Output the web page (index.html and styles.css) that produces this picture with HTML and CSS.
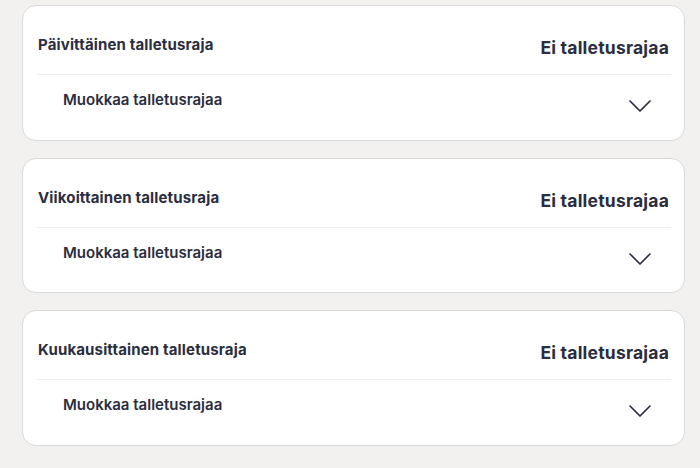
FILE: index.html
```html
<!DOCTYPE html>
<html lang="fi">
<head>
<meta charset="utf-8">
<link rel="stylesheet" href="styles.css">
</head>
<body>
<div class="list">
  <section class="card">
    <div class="head">
      <span class="title">Päivittäinen talletusraja</span>
      <span class="value">Ei talletusrajaa</span>
    </div>
    <div class="row">
      <span class="edit">Muokkaa talletusrajaa</span>
      <svg class="chev" width="22" height="12" viewBox="0 0 22 12"><path d="M1 1 L11 11 L21 1" fill="none" stroke="#2b2d40" stroke-width="1.7" stroke-linecap="round" stroke-linejoin="round"/></svg>
    </div>
  </section>
  <section class="card">
    <div class="head">
      <span class="title">Viikoittainen talletusraja</span>
      <span class="value">Ei talletusrajaa</span>
    </div>
    <div class="row">
      <span class="edit">Muokkaa talletusrajaa</span>
      <svg class="chev" width="22" height="12" viewBox="0 0 22 12"><path d="M1 1 L11 11 L21 1" fill="none" stroke="#2b2d40" stroke-width="1.7" stroke-linecap="round" stroke-linejoin="round"/></svg>
    </div>
  </section>
  <section class="card">
    <div class="head">
      <span class="title">Kuukausittainen talletusraja</span>
      <span class="value">Ei talletusrajaa</span>
    </div>
    <div class="row">
      <span class="edit">Muokkaa talletusrajaa</span>
      <svg class="chev" width="22" height="12" viewBox="0 0 22 12"><path d="M1 1 L11 11 L21 1" fill="none" stroke="#2b2d40" stroke-width="1.7" stroke-linecap="round" stroke-linejoin="round"/></svg>
    </div>
  </section>
</div>
</body>
</html>
```
FILE: styles.css
```css
html, body {
  margin: 0;
  padding: 0;
  background: #f2f1ef;
}
body {
  width: 700px;
  height: 468px;
  overflow: hidden;
  font-family: "Inter", "Noto Sans", sans-serif;
  color: #2b2d40;
}
.list {
  display: flex;
  flex-direction: column;
  gap: 17px;
  padding: 5px 15px 0 22px;
}
.card {
  box-sizing: border-box;
  height: 135.5px;
  background: #ffffff;
  border: 1px solid #d9d9dc;
  border-radius: 14px;
  padding: 0 13px 0 14px;
}
.head {
  display: flex;
  justify-content: space-between;
  align-items: flex-start;
  padding: 29px 2px 0 1px;
  height: 39px;
  border-bottom: 1px solid #efefef;
}
.title {
  font-size: 15px;
  line-height: 20px;
  font-weight: 700;
  letter-spacing: 0.15px;
}
.value {
  margin-top: 1px;
  font-size: 17.5px;
  line-height: 24px;
  font-weight: 700;
  letter-spacing: 0.2px;
}
.row {
  display: flex;
  justify-content: space-between;
  align-items: flex-start;
  padding: 14px 20px 0 26px;
}
.edit {
  font-size: 15px;
  font-weight: 600;
  line-height: 22px;
}
.chev {
  margin-top: 11px;
  display: block;
}
```
